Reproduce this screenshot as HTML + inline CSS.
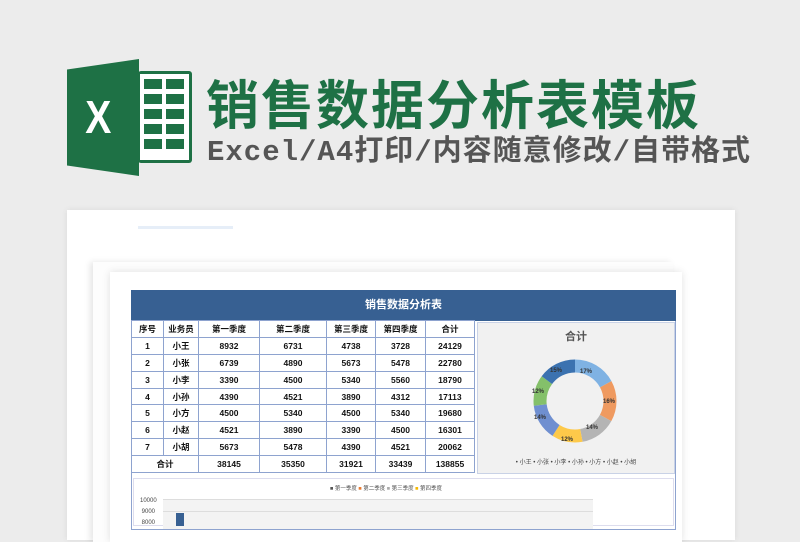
<!DOCTYPE html>
<html><head><meta charset="utf-8"><style>
*{margin:0;padding:0;box-sizing:border-box}
body{width:800px;height:526px;overflow:hidden;background:#ececec;position:relative;font-family:"Liberation Sans","Noto Sans CJK SC",sans-serif}
.abs{position:absolute}
table{border-collapse:collapse;position:absolute;left:131px;top:320px;font-size:8.5px;font-weight:bold;color:#111;background:#fff}
td{border:1px solid #8ea3cf;text-align:center;height:16.9px;padding:0}
</style></head><body>
<!-- logo -->
<div class="abs" style="left:67px;top:59px;width:72px;height:117px;background:#1e7145;clip-path:polygon(0 9%,100% 0,100% 100%,0 91%)"></div>
<div class="abs" style="left:138px;top:71px;width:54px;height:92px;background:#1e7145;border-radius:3px"></div>
<div class="abs" style="left:140px;top:74px;width:49px;height:86px;background:#fff"></div>
<svg class="abs" style="left:138px;top:71px" width="54" height="92">
<g fill="#1e7145">
<rect x="6" y="8" width="18" height="10"/><rect x="28" y="8" width="18" height="10"/>
<rect x="6" y="23" width="18" height="10"/><rect x="28" y="23" width="18" height="10"/>
<rect x="6" y="38" width="18" height="10"/><rect x="28" y="38" width="18" height="10"/>
<rect x="6" y="53" width="18" height="10"/><rect x="28" y="53" width="18" height="10"/>
<rect x="6" y="68" width="18" height="10"/><rect x="28" y="68" width="18" height="10"/>
</g></svg>
<div class="abs" style="left:83px;top:90px;color:#fff;font-size:46px;font-weight:bold;transform:scaleX(0.85)">X</div>
<div class="abs" style="left:206px;top:70px;font-size:53px;font-weight:bold;color:#1e7145;letter-spacing:2px;font-family:'Noto Sans CJK SC',sans-serif;line-height:64px">销售数据分析表模板</div>
<div class="abs" style="left:207px;top:134px;font-size:29px;font-weight:bold;color:#555;font-family:'Liberation Mono','Noto Sans CJK SC',monospace;line-height:38px;letter-spacing:1px">Excel/A4打印/内容随意修改/自带格式</div>
<!-- papers -->
<div class="abs" style="left:67px;top:210px;width:668px;height:330px;background:#fff;box-shadow:0 0 6px rgba(0,0,0,.08)"></div>
<div class="abs" style="left:138px;top:226px;width:95px;height:3px;background:#e6eef8"></div>
<div class="abs" style="left:93px;top:262px;width:580px;height:280px;background:#fdfdfd;box-shadow:-3px 0 6px rgba(0,0,0,.1)"></div>
<div class="abs" style="left:110px;top:272px;width:572px;height:270px;background:#fff;box-shadow:0 0 8px rgba(0,0,0,.12)"></div>
<!-- sheet -->
<div class="abs" style="left:131px;top:290px;width:545px;height:240px;border:1px solid #8ea3cf;background:#fff"></div>
<div class="abs" style="left:131px;top:290px;width:545px;height:31px;background:#376092;color:#fff;font-size:11px;font-weight:bold;text-align:center;line-height:31px">销售数据分析表</div>
<table>
<tr><td style="width:32px">序号</td><td style="width:35px">业务员</td><td style="width:61px">第一季度</td><td style="width:67px">第二季度</td><td style="width:49px">第三季度</td><td style="width:50px">第四季度</td><td style="width:49px">合计</td></tr>
<tr><td>1</td><td>小王</td><td>8932</td><td>6731</td><td>4738</td><td>3728</td><td>24129</td></tr>
<tr><td>2</td><td>小张</td><td>6739</td><td>4890</td><td>5673</td><td>5478</td><td>22780</td></tr>
<tr><td>3</td><td>小李</td><td>3390</td><td>4500</td><td>5340</td><td>5560</td><td>18790</td></tr>
<tr><td>4</td><td>小孙</td><td>4390</td><td>4521</td><td>3890</td><td>4312</td><td>17113</td></tr>
<tr><td>5</td><td>小方</td><td>4500</td><td>5340</td><td>4500</td><td>5340</td><td>19680</td></tr>
<tr><td>6</td><td>小赵</td><td>4521</td><td>3890</td><td>3390</td><td>4500</td><td>16301</td></tr>
<tr><td>7</td><td>小胡</td><td>5673</td><td>5478</td><td>4390</td><td>4521</td><td>20062</td></tr>
<tr><td colspan="2">合计</td><td>38145</td><td>35350</td><td>31921</td><td>33439</td><td>138855</td></tr>
</table>
<!-- donut panel -->
<div class="abs" style="left:477px;top:322px;width:198px;height:152px;background:#f1f1f1;border:1px solid #c9d2e6"></div>
<div class="abs" style="left:477px;top:328px;width:198px;text-align:center;font-size:11px;font-weight:bold;color:#555">合计</div>
<svg class="abs" style="left:530px;top:356px" width="90" height="90" viewBox="0 0 90 90">
<g transform="rotate(-90 45 45)" fill="none" stroke-width="13" stroke-linecap="butt">
<circle cx="45" cy="45" r="35" stroke="#7fb2e3" stroke-dasharray="37.4 182.5" stroke-dashoffset="0"/>
<circle cx="45" cy="45" r="35" stroke="#ef9a60" stroke-dasharray="35.2 184.7" stroke-dashoffset="-37.4"/>
<circle cx="45" cy="45" r="35" stroke="#b4b4b4" stroke-dasharray="30.8 189.1" stroke-dashoffset="-72.6"/>
<circle cx="45" cy="45" r="35" stroke="#fdc94a" stroke-dasharray="26.4 193.5" stroke-dashoffset="-103.4"/>
<circle cx="45" cy="45" r="35" stroke="#6f8fd0" stroke-dasharray="30.8 189.1" stroke-dashoffset="-129.8"/>
<circle cx="45" cy="45" r="35" stroke="#84c06a" stroke-dasharray="26.4 193.5" stroke-dashoffset="-160.6"/>
<circle cx="45" cy="45" r="35" stroke="#3b72b0" stroke-dasharray="33 187" stroke-dashoffset="-187"/>
</g>
<g font-size="6" fill="#333" font-weight="bold" font-family="Liberation Sans">
<text x="50" y="17">17%</text><text x="73" y="47">16%</text><text x="56" y="73">14%</text>
<text x="31" y="85">12%</text><text x="4" y="63">14%</text><text x="2" y="37">12%</text><text x="20" y="16">15%</text></g>
</svg>
<div class="abs" style="left:477px;top:457px;width:198px;text-align:center;font-size:6px;color:#444">• 小王 • 小张 • 小李 • 小孙 • 小方 • 小赵 • 小胡</div>
<!-- bar chart -->
<div class="abs" style="left:133px;top:478px;width:541px;height:48px;background:#fff;border:1px solid #dde"></div>
<div class="abs" style="left:330px;top:484px;font-size:5.5px;color:#555">■ 第一季度 <span style="color:#e97a2e">■</span> 第二季度 <span style="color:#aaa">■</span> 第三季度 <span style="color:#f5b800">■</span> 第四季度</div>
<div class="abs" style="left:140px;top:496px;font-size:6px;color:#444;line-height:11px">10000<br>&nbsp;9000<br>&nbsp;8000</div>
<div class="abs" style="left:163px;top:499px;width:430px;height:30px;background:#f3f3f3;border-top:1px solid #ddd"></div>
<div class="abs" style="left:163px;top:511px;width:430px;height:1px;background:#ddd"></div>
<div class="abs" style="left:176px;top:513px;width:8px;height:13px;background:#376092"></div>
</body></html>
